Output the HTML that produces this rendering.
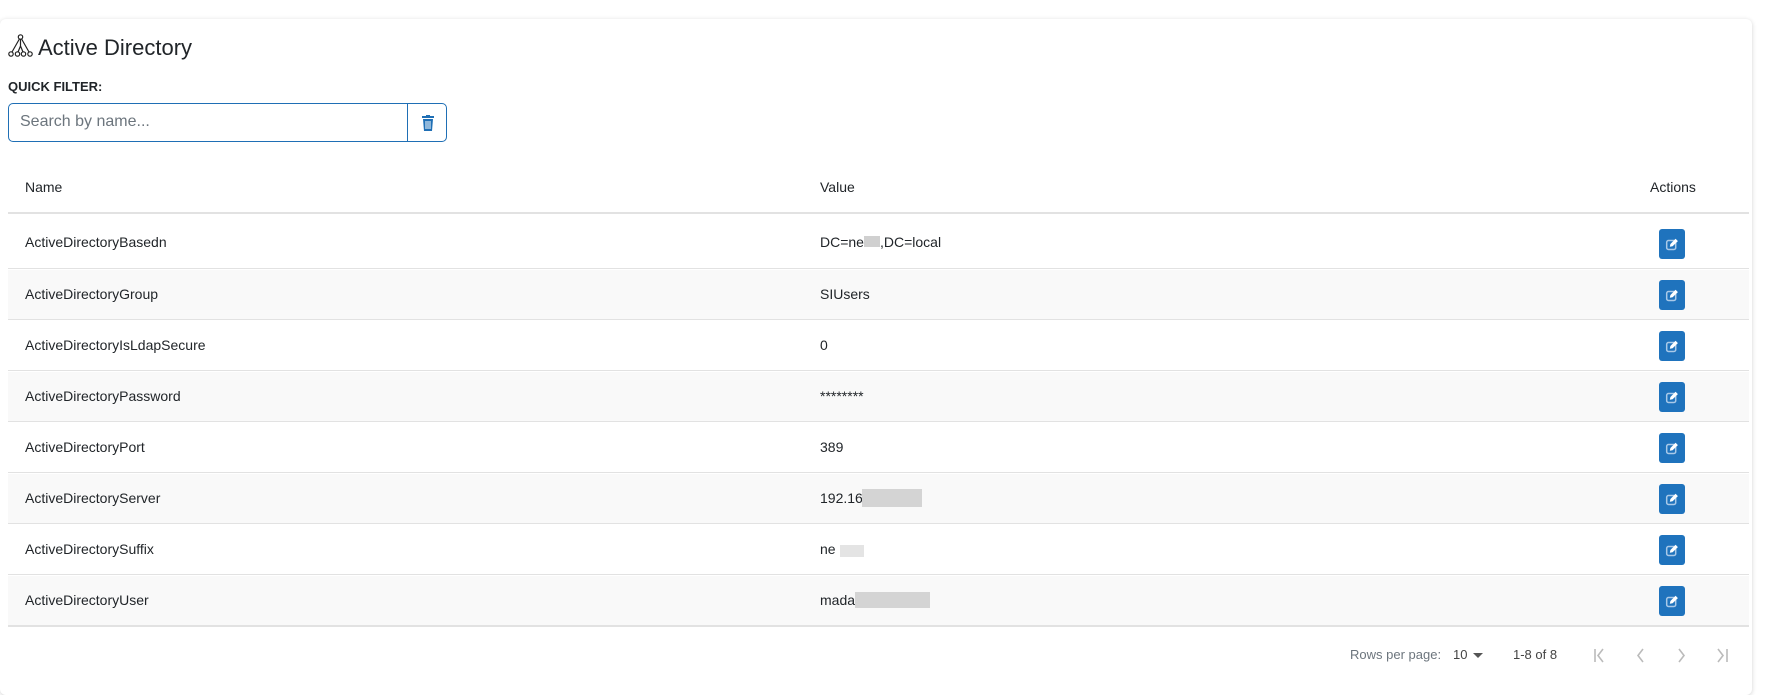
<!DOCTYPE html>
<html><head><meta charset="utf-8"><style>
*{box-sizing:border-box;margin:0;padding:0}
body{width:1766px;height:695px;background:#fff;font-family:"Liberation Sans",sans-serif;color:#212529;position:relative;overflow:hidden}
.card{position:absolute;left:0;top:19px;width:1752px;height:676px;background:#fff;border-radius:6px;box-shadow:0 1px 5px rgba(0,0,0,.18)}
.abs{position:absolute}
.title{left:38px;top:34px;font-size:22px;line-height:28px}
.ql{left:8px;top:79px;font-size:13px;font-weight:bold}
.inp{left:8px;top:103px;width:439px;height:39px;border:1px solid #1f6fb5;border-radius:5px}
.inp .ph{position:absolute;left:11px;top:9px;font-size:16px;color:#6c757d}
.inp .div{position:absolute;left:398px;top:0;width:1px;height:37px;background:#1f6fb5}
.th{font-size:14px;top:179px}
.line{position:absolute;left:8px;width:1741px;height:2px;background:#e2e2e2}
.row{position:absolute;left:8px;width:1741px;height:49px}
.row.g{background:#f9f9f9}
.row span{position:absolute;top:16px;font-size:14px}
.btn{position:absolute;left:1659px;width:26px;height:30px;background:#1f73bd;border-radius:3px}
.blur{position:absolute;background:#d4d4d4}
.pg{position:absolute;top:647px;font-size:13px;color:#6c757d}
</style></head><body>
<div class="card"></div>
<svg class="abs" style="left:8px;top:34px" width="25" height="24" viewBox="0 0 25 24" fill="none" stroke="#222" stroke-width="1.2"><circle cx="12.5" cy="3" r="2.2"/><circle cx="3" cy="20" r="2.2"/><circle cx="9.5" cy="20" r="2.2"/><circle cx="15.5" cy="20" r="2.2"/><circle cx="22" cy="20" r="2.2"/><path d="M11.4 5L4 18M13.6 5L21 18M12.5 5.2V12M12.5 12L10 18M12.5 12L15 18"/></svg>
<div class="abs title">Active Directory</div>
<div class="abs ql">QUICK FILTER:</div>
<div class="abs inp"><span class="ph">Search by name...</span><div class="div"></div>
<svg style="position:absolute;left:412px;top:11px" width="14" height="16" viewBox="0 0 14 16"><rect x="1" y="1" width="12" height="2" fill="#1f6fb5"/><rect x="5" y="0" width="4" height="2" fill="#1f6fb5"/><path d="M2 4h10l-1 12H3z" fill="#1f6fb5"/><path d="M5 6v8M7 6v8M9 6v8" stroke="#fff" stroke-width="1"/></svg></div>
<div class="abs th" style="left:25px">Name</div>
<div class="abs th" style="left:820px">Value</div>
<div class="abs th" style="left:1650px">Actions</div>
<div class="line" style="top:212px"></div>
<div class="row" style="top:214px;height:55px"><span style="left:17px;top:20px">ActiveDirectoryBasedn</span><span style="left:812px;top:20px">DC=ne<i style="display:inline-block;width:16px;height:11px;background:#d0d0d0"></i>,DC=local</span></div>
<div class="row g" style="top:270px"><span style="left:17px">ActiveDirectoryGroup</span><span style="left:812px">SIUsers</span></div>
<div class="row" style="top:321px"><span style="left:17px">ActiveDirectoryIsLdapSecure</span><span style="left:812px">0</span></div>
<div class="row g" style="top:372px"><span style="left:17px">ActiveDirectoryPassword</span><span style="left:812px">********</span></div>
<div class="row" style="top:423px"><span style="left:17px">ActiveDirectoryPort</span><span style="left:812px">389</span></div>
<div class="row g" style="top:474px"><span style="left:17px">ActiveDirectoryServer</span><span style="left:812px">192.16</span></div>
<div class="row" style="top:525px"><span style="left:17px">ActiveDirectorySuffix</span><span style="left:812px">ne</span></div>
<div class="row g" style="top:576px"><span style="left:17px">ActiveDirectoryUser</span><span style="left:812px">mada</span></div>
<div class="line" style="top:268px;height:1px"></div>
<div class="line" style="top:319px;height:1px"></div>
<div class="line" style="top:370px;height:1px"></div>
<div class="line" style="top:421px;height:1px"></div>
<div class="line" style="top:472px;height:1px"></div>
<div class="line" style="top:523px;height:1px"></div>
<div class="line" style="top:574px;height:1px"></div>
<div class="line" style="top:625px;height:2px"></div>
<div class="blur" style="left:862px;top:489px;width:60px;height:18px"></div>
<div class="blur" style="left:840px;top:545px;width:24px;height:12px;background:#e4e4e4"></div>
<div class="blur" style="left:855px;top:592px;width:75px;height:16px"></div>
<div class="btn" style="top:229px"></div><div class="btn" style="top:280px"></div><div class="btn" style="top:331px"></div><div class="btn" style="top:382px"></div><div class="btn" style="top:433px"></div><div class="btn" style="top:484px"></div><div class="btn" style="top:535px"></div><div class="btn" style="top:586px"></div>
<svg class="abs" style="left:0;top:0;pointer-events:none" width="1766" height="695">
<defs><g id="ed"><rect x="0.7" y="3.5" width="9" height="9" rx="1.8" fill="none" stroke="#a9c9e8" stroke-width="1.5"/><path d="M3.8 9.8L4.4 7L9.6 1.8L11.9 4.1L6.6 9.3Z" fill="#fff"/></g></defs>
<use href="#ed" x="1666" y="237"/><use href="#ed" x="1666" y="288"/><use href="#ed" x="1666" y="339"/><use href="#ed" x="1666" y="390"/><use href="#ed" x="1666" y="441"/><use href="#ed" x="1666" y="492"/><use href="#ed" x="1666" y="543"/><use href="#ed" x="1666" y="594"/>
<path d="M1473 653l5 5 5-5z" fill="#555"/>
<g stroke="#bbb" stroke-width="1.6" fill="none"><path d="M1595 649v13M1603 649l-5 6.5 5 6.5"/><path d="M1643 649l-5 6.5 5 6.5"/><path d="M1679 649l5 6.5-5 6.5"/><path d="M1718 649l5 6.5-5 6.5M1727 649v13"/></g>
</svg>
<div class="pg" style="left:1350px">Rows per page:</div>
<div class="pg" style="left:1453px;color:#444">10</div>
<div class="pg" style="left:1513px;color:#444">1-8 of 8</div>
</body></html>
